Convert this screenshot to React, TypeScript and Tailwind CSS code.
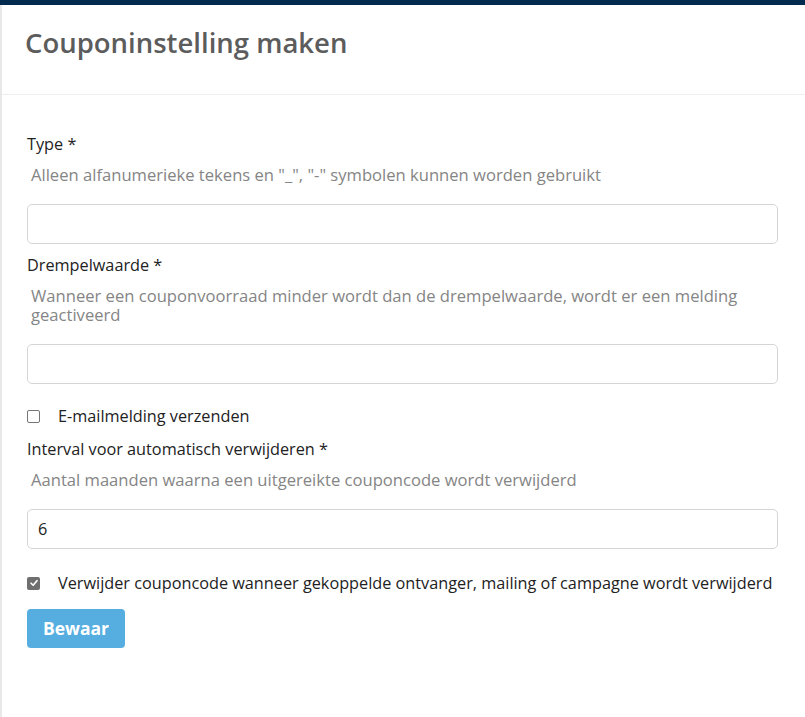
import { useState } from 'react';

function Field({ label, help, value, top = 'mt-[10px]' }: { label: string; help: string; value?: string; top?: string }) {
  return (
    <div className={top}>
      <label className="block text-[16.25px] leading-[22px] text-[#222]">{label}</label>
      <p className="mt-[10px] pl-1 text-[16.6px] leading-[19px] text-[#858585]">{help}</p>
      <input
        defaultValue={value}
        className="mt-[20px] block h-10 w-full rounded-[5px] border border-[#d5d5d5] bg-white px-[10px] text-[16.25px] text-[#222] outline-none"
      />
    </div>
  );
}

function Check({ label, checked }: { label: string; checked?: boolean }) {
  const [on, setOn] = useState(!!checked);
  return (
    <label className="flex items-center text-[16.25px] leading-[22px] text-[#222]" onClick={() => setOn(!on)}>
      {on ? (
        <span className="flex h-[13px] w-[13px] items-center justify-center rounded-[2px] bg-[#6f6f6f]">
          <svg viewBox="0 0 12 12" className="h-[10px] w-[10px]" fill="none" stroke="white" strokeWidth="2" strokeLinecap="round" strokeLinejoin="round">
            <path d="M2.5 6.3 5 8.7 9.6 3.3" />
          </svg>
        </span>
      ) : (
        <span className="h-[13px] w-[13px] rounded-[2px] border border-[#767676] bg-white" />
      )}
      <span className="ml-[18px]">{label}</span>
    </label>
  );
}

export default function App() {
  return (
    <div className="flex min-h-[717px] flex-col bg-white" style={{ fontFamily: '"Open Sans", sans-serif' }}>
      <div className="h-[5px] bg-[#002a4e]" />
      <div className="flex flex-1 flex-col border-l-2 border-[#e8e8e8]">
        <div className="flex h-[90px] items-center border-b border-[#eeeeee] pl-[23px] pb-[13px]">
          <h1 className="text-[27.5px] font-semibold text-[#5c5c5c]">Couponinstelling maken</h1>
        </div>
        <div className="pl-[25px] pr-[27px] pt-[28px]">
          <Field label="Type *" help={'Alleen alfanumerieke tekens en "_", "-" symbolen kunnen worden gebruikt'} />
          <Field
            label="Drempelwaarde *"
            help="Wanneer een couponvoorraad minder wordt dan de drempelwaarde, wordt er een melding geactiveerd"
          />
          <div className="mt-[21px]">
            <Check label="E-mailmelding verzenden" />
          </div>
          <Field
            top="mt-[11px]"
            label="Interval voor automatisch verwijderen *"
            help="Aantal maanden waarna een uitgereikte couponcode wordt verwijderd"
            value="6"
          />
          <div className="mt-[23px]">
            <Check label="Verwijder couponcode wanneer gekoppelde ontvanger, mailing of campagne wordt verwijderd" checked />
          </div>
          <button className="mt-[15px] h-[39px] w-[98px] rounded-[4px] bg-[#56aee0] text-[17.5px] font-bold text-white">
            Bewaar
          </button>
        </div>
      </div>
    </div>
  );
}
